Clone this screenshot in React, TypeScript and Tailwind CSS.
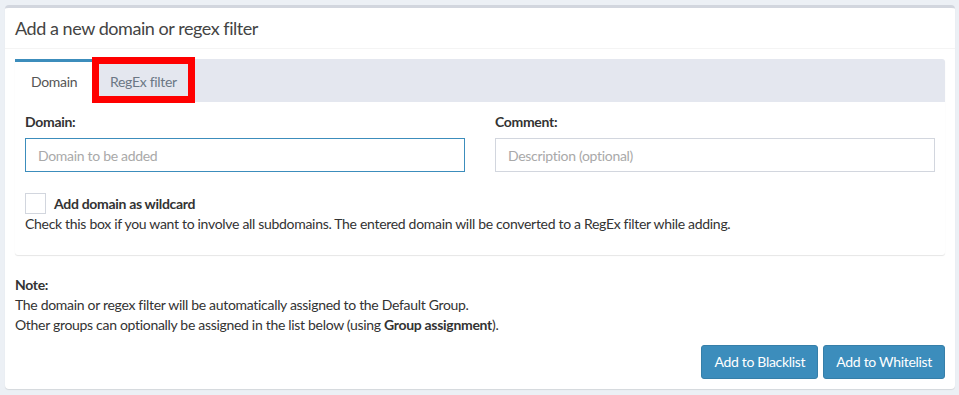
export default function App() {
  return (
    <div className="min-h-[395px] bg-[#ecf0f5] pl-[5px] pt-[5px] font-['Lato',sans-serif] text-[14px] leading-[20px] tracking-[-0.022em] text-[#333]">
      <div className="w-[950px] rounded-[4px] border-t-[3px] border-[#d2d6de] bg-white shadow-[0_1px_1px_rgba(0,0,0,0.1)]">
        {/* Header */}
        <div className="border-b border-[#f4f4f4] p-[10px]">
          <h3 className="text-[18px] leading-[20px] tracking-[-0.025em] text-[#444]">Add a new domain or regex filter</h3>
        </div>

        {/* Body */}
        <div className="p-[10px]">
          <div className="mb-[20px] rounded-[3px] bg-white shadow-[0_1px_1px_rgba(0,0,0,0.1)]">
            {/* Tabs */}
            <div className="relative flex h-[43px] rounded-t-[3px] bg-[#e4e7ef]">
              <div className="w-[77px] border-t-[3px] border-[#3c8dbc] bg-white pl-[16px] pt-[10px] text-[#555]">Domain</div>
              <div className="pl-[18px] pt-[13px] text-[#6b7785]">RegEx filter</div>
              <div className="pointer-events-none absolute left-[77px] top-[-2px] h-[46px] w-[103px] border-[7px] border-[#ff0000]" />
            </div>

            {/* Tab content */}
            <div className="px-[10px] pt-[10px] pb-[11px]">
              <div className="grid grid-cols-2 gap-[30px]">
                <div>
                  <label className="mb-[6px] block font-bold">Domain:</label>
                  <input
                    type="text"
                    placeholder="Domain to be added"
                    className="h-[34px] w-full border border-[#3c8dbc] px-[12px] text-[14px] outline-none placeholder:text-[#a9a9a9]"
                  />
                </div>
                <div>
                  <label className="mb-[6px] block font-bold">Comment:</label>
                  <input
                    type="text"
                    placeholder="Description (optional)"
                    className="h-[34px] w-full border border-[#d2d6de] px-[12px] text-[14px] outline-none placeholder:text-[#a9a9a9]"
                  />
                </div>
              </div>

              <div className="mt-[21px] flex items-center gap-[8px]">
                <div className="h-[21px] w-[21px] border border-[#d2d6de] bg-white" />
                <span className="font-bold">Add domain as wildcard</span>
              </div>
              <p className="mb-[10px]">
                Check this box if you want to involve all subdomains. The entered domain will be converted to a RegEx filter while adding.
              </p>
            </div>
          </div>

          {/* Note */}
          <div>
            <p className="font-bold">Note:</p>
            <p>The domain or regex filter will be automatically assigned to the Default Group.</p>
            <p>
              Other groups can optionally be assigned in the list below (using <b>Group assignment</b>).
            </p>
          </div>

          <div className="mt-[10px] flex justify-end gap-[5px]">
            <button className="h-[34px] rounded-[3px] border border-[#367fa9] bg-[#3c8dbc] px-[12px] text-white">Add to Blacklist</button>
            <button className="h-[34px] rounded-[3px] border border-[#367fa9] bg-[#3c8dbc] px-[12px] text-white">Add to Whitelist</button>
          </div>
        </div>
      </div>
    </div>
  );
}
